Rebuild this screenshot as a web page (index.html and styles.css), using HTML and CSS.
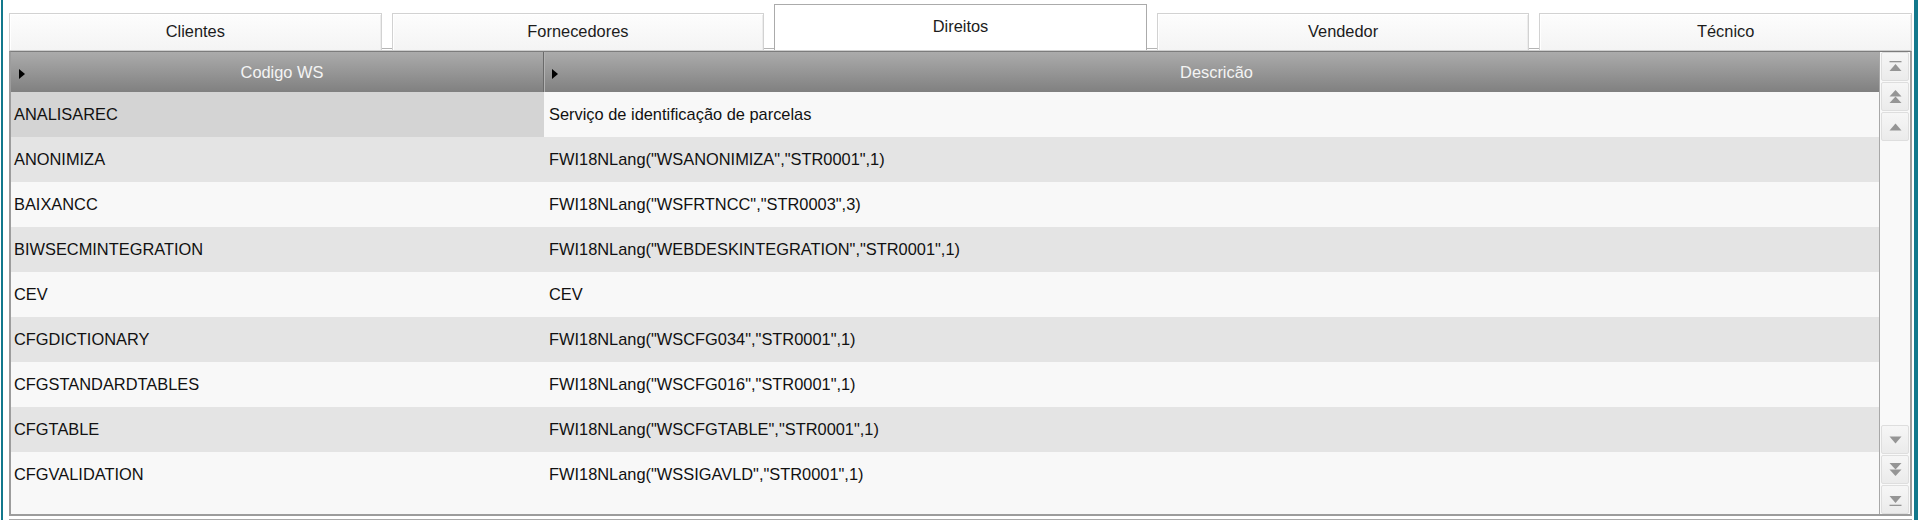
FILE: index.html
```html
<!DOCTYPE html>
<html lang="pt">
<head>
<meta charset="utf-8">
<title>Direitos</title>
<link rel="stylesheet" href="styles.css">
</head>
<body>
<div class="window">
  <div class="tabs">
    <div class="tab">Clientes</div>
    <div class="tab">Fornecedores</div>
    <div class="tab active">Direitos</div>
    <div class="tab">Vendedor</div>
    <div class="tab">Técnico</div>
  </div>
  <div class="panel">
    <div class="grid">
      <div class="table">
        <div class="thead">
          <div class="th c1"><span class="arrow"></span><span class="label">Codigo WS</span></div>
          <div class="th c2"><span class="arrow"></span><span class="label">Descricão</span></div>
        </div>
        <div class="tbody">
          <div class="row odd selected"><div class="td c1">ANALISAREC</div><div class="td c2">Serviço de identificação de parcelas</div></div>
          <div class="row even"><div class="td c1">ANONIMIZA</div><div class="td c2">FWI18NLang("WSANONIMIZA","STR0001",1)</div></div>
          <div class="row odd"><div class="td c1">BAIXANCC</div><div class="td c2">FWI18NLang("WSFRTNCC","STR0003",3)</div></div>
          <div class="row even"><div class="td c1">BIWSECMINTEGRATION</div><div class="td c2">FWI18NLang("WEBDESKINTEGRATION","STR0001",1)</div></div>
          <div class="row odd"><div class="td c1">CEV</div><div class="td c2">CEV</div></div>
          <div class="row even"><div class="td c1">CFGDICTIONARY</div><div class="td c2">FWI18NLang("WSCFG034","STR0001",1)</div></div>
          <div class="row odd"><div class="td c1">CFGSTANDARDTABLES</div><div class="td c2">FWI18NLang("WSCFG016","STR0001",1)</div></div>
          <div class="row even"><div class="td c1">CFGTABLE</div><div class="td c2">FWI18NLang("WSCFGTABLE","STR0001",1)</div></div>
          <div class="row odd"><div class="td c1">CFGVALIDATION</div><div class="td c2">FWI18NLang("WSSIGAVLD","STR0001",1)</div></div>
        </div>
      </div>
      <div class="scroll">
        <div class="sgroup">
          <div class="sbtn"><svg width="13" height="12" viewBox="0 0 13 12"><rect x="0.5" y="0" width="12" height="1.3" fill="#959595"/><polygon points="0.5,10 6.5,3 12.5,10" fill="#959595"/></svg></div>
          <div class="sbtn"><svg width="13" height="15" viewBox="0 0 13 15"><polygon points="0.5,7.5 6.5,1 12.5,7.5" fill="#959595"/><polygon points="0.5,14 6.5,7.5 12.5,14" fill="#959595"/></svg></div>
          <div class="sbtn"><svg width="13" height="8" viewBox="0 0 13 8"><polygon points="0.5,7.5 6.5,0.5 12.5,7.5" fill="#959595"/></svg></div>
        </div>
        <div class="sgroup">
          <div class="sbtn"><svg width="13" height="8" viewBox="0 0 13 8"><polygon points="0.5,0.5 6.5,7.5 12.5,0.5" fill="#959595"/></svg></div>
          <div class="sbtn"><svg width="13" height="15" viewBox="0 0 13 15"><polygon points="0.5,1 6.5,7.5 12.5,1" fill="#959595"/><polygon points="0.5,7.5 6.5,14 12.5,7.5" fill="#959595"/></svg></div>
          <div class="sbtn"><svg width="13" height="12" viewBox="0 0 13 12"><polygon points="0.5,2 6.5,9 12.5,2" fill="#959595"/><rect x="0.5" y="10.7" width="12" height="1.3" fill="#959595"/></svg></div>
        </div>
      </div>
    </div>
  </div>
</div>
</body>
</html>
```
FILE: styles.css
```css
html, body {
  margin: 0;
  padding: 0;
  background: #ffffff;
}

body {
  font-family: "Liberation Sans", Arial, sans-serif;
  font-size: 16.4px;
  color: #111111;
}

.window {
  box-sizing: border-box;
  width: 1917px;
  height: 520px;
  margin-left: 1px;
  border-left: 2px solid #12788c;
  border-right: 4px solid #12788c;
  padding: 0 2px 0 6px;
  display: flex;
  flex-direction: column;
  background: #ffffff;
}

/* ---------- tabs ---------- */
.tabs {
  box-sizing: border-box;
  height: 51px;
  display: flex;
  align-items: flex-end;
  gap: 10px;
  border-bottom: 1px solid #cfcfcf;
  background: linear-gradient(to bottom, transparent 48px, #b4b4b4 48px, #b4b4b4 49px, transparent 49px);
  flex: none;
}

.tab {
  box-sizing: border-box;
  flex: 1;
  height: 37px;
  display: flex;
  align-items: center;
  justify-content: center;
  border: 1px solid #d2d2d2;
  border-bottom: none;
  box-shadow: inset 1px 1px 0 #ffffff, inset -1px 0 0 #ececec;
  background: linear-gradient(to bottom, #fdfdfd, #f4f4f4);
  color: #1c1c1c;
  padding-bottom: 1px;
}

.tab.active {
  height: 46px;
  background: #ffffff;
  border-color: #ababab;
  box-shadow: none;
  padding-bottom: 2px;
}

/* ---------- panel / grid ---------- */
.panel {
  box-sizing: border-box;
  height: 469px;
  padding-bottom: 2px;
  border-bottom: 1px solid #a9a9a9;
  flex: none;
}

.grid {
  box-sizing: border-box;
  height: 465px;
  display: flex;
  border-top: 1px solid #7c7c7c;
  border-left: 2px solid #9c9c9c;
  border-right: 2px solid #9c9c9c;
  border-bottom: 2px solid #9c9c9c;
  background: #f8f8f8;
}

.table {
  flex: 1;
  display: flex;
  flex-direction: column;
  min-width: 0;
}

.thead {
  height: 40px;
  display: flex;
  background: linear-gradient(to bottom, #ababab 0%, #969696 50%, #808080 100%);
  flex: none;
}

.th {
  box-sizing: border-box;
  display: flex;
  align-items: center;
  color: #f4f4f4;
}

.th.c1 {
  width: 533px;
  border-right: 1px solid #6a6a6a;
  padding-left: 8px;
}

.th.c2 {
  flex: 1;
  border-left: 1px solid #b2b2b2;
  padding-left: 7px;
}

.arrow {
  width: 0;
  height: 0;
  border-left: 6px solid #000000;
  border-top: 5px solid transparent;
  border-bottom: 5px solid transparent;
  margin-top: 3px;
  flex: none;
}

.label {
  flex: 1;
  text-align: center;
  padding-right: 4px;
}

.tbody {
  flex: 1;
  display: flex;
  flex-direction: column;
}

.row {
  height: 45px;
  display: flex;
  align-items: stretch;
  flex: none;
}

.row.odd { background: #f8f8f8; }
.row.even { background: #e4e4e4; }

.td {
  box-sizing: border-box;
  display: flex;
  align-items: center;
  white-space: nowrap;
}

.td.c1 {
  width: 534px;
  padding-left: 3px;
}

.td.c2 {
  flex: 1;
  padding-left: 4px;
}

.row.selected .td.c1 {
  background: #d4d4d4;
  width: 533px;
}

.row.selected .td.c2 {
  padding-left: 5px;
}

/* ---------- scrollbar ---------- */
.scroll {
  box-sizing: border-box;
  width: 31px;
  flex: none;
  border-left: 1px solid #a8a8a8;
  padding: 0 1px;
  display: flex;
  flex-direction: column;
  justify-content: space-between;
  background: #f9f9f9;
}

.sgroup {
  display: flex;
  flex-direction: column;
  gap: 1px;
}

.sbtn {
  box-sizing: border-box;
  height: 29px;
  display: flex;
  align-items: center;
  justify-content: center;
  border: 1px solid #dedede;
  border-radius: 2px;
  background: linear-gradient(to bottom, #f6f6f6, #ebebeb);
}

.sbtn svg {
  display: block;
}
```
